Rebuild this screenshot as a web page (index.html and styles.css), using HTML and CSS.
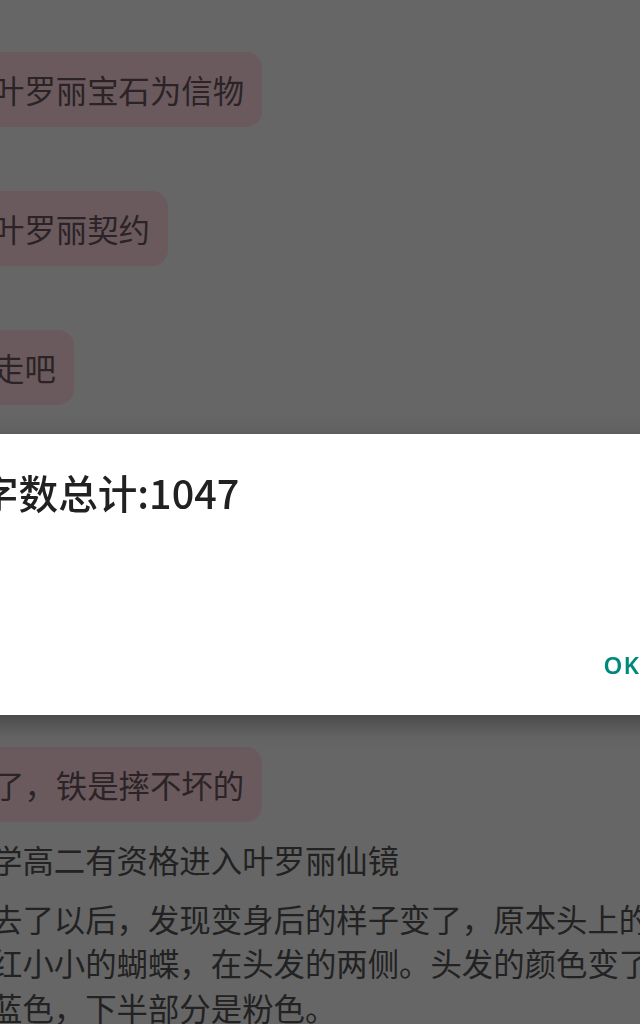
FILE: index.html
```html
<!DOCTYPE html>
<html lang="zh-CN">
  <head>
    <meta charset="UTF-8" />
    <meta name="viewport" content="width=device-width, initial-scale=1.0" />
    <title>字数统计</title>
    <link rel="stylesheet" href="styles.css">
  </head>
  <body>
    <div class="chat">
      <div class="bubble">叶罗丽宝石为信物</div>
      <div class="bubble">叶罗丽契约</div>
      <div class="bubble">走吧</div>
      <div class="covered"></div>
      <div class="bubble">了，铁是摔不坏的</div>
      <p class="line">学高二有资格进入叶罗丽仙镜</p>
      <p class="para">去了以后，发现变身后的样子变了，原本头上的红小小的蝴蝶，在头发的两侧。头发的颜色变了蓝色，下半部分是粉色。</p>
    </div>

    <div class="dialog">
      <div class="dialog-message">字数总计:1047</div>
      <div class="dialog-actions">
        <button class="dialog-btn">OK</button>
      </div>
    </div>
  </body>
</html>
```

FILE: styles.css
```css
html,
body {
  margin: 0;
  padding: 0;
  height: 1024px;
  overflow: hidden;
}
body {
  font-family: "Noto Sans CJK SC", "Noto Sans", sans-serif;
  background: #666666;
}
.chat {
  margin-left: -26px;
  padding-top: 52px;
  display: flex;
  flex-direction: column;
  align-items: flex-start;
  gap: 64px;
}
.bubble {
  background: #6a5a5e;
  color: #2b2326;
  font-size: 31.4px;
  line-height: 45px;
  padding: 15px 18px 15px 19px;
  border-radius: 16px;
}
.covered {
  height: 214px;
}
.line,
.para {
  margin: 0;
  padding-left: 17px;
  color: #222222;
  font-size: 31.4px;
  line-height: 44.5px;
}
.line {
  margin-top: -48px;
}
.para {
  margin-top: -50px;
  width: 665px;
}
.dialog {
  position: fixed;
  top: 434px;
  left: -40px;
  width: 720px;
  height: 281px;
  box-sizing: border-box;
  background: #ffffff;
  padding: 33px 40px 35px 19px;
  display: flex;
  flex-direction: column;
  justify-content: space-between;
  box-shadow: 0px 8px 22px rgba(0, 0, 0, 0.35);
}
.dialog-message {
  font-size: 39.6px;
  line-height: 50px;
  color: #212121;
  font-weight: 500;
}
.dialog-actions {
  display: flex;
  justify-content: flex-end;
}
.dialog-btn {
  font-family: "Noto Sans", sans-serif;
  font-size: 24px;
  font-weight: 600;
  line-height: 30px;
  color: #00897b;
  background: none;
  border: none;
  padding: 0;
  letter-spacing: 1px;
}
```
